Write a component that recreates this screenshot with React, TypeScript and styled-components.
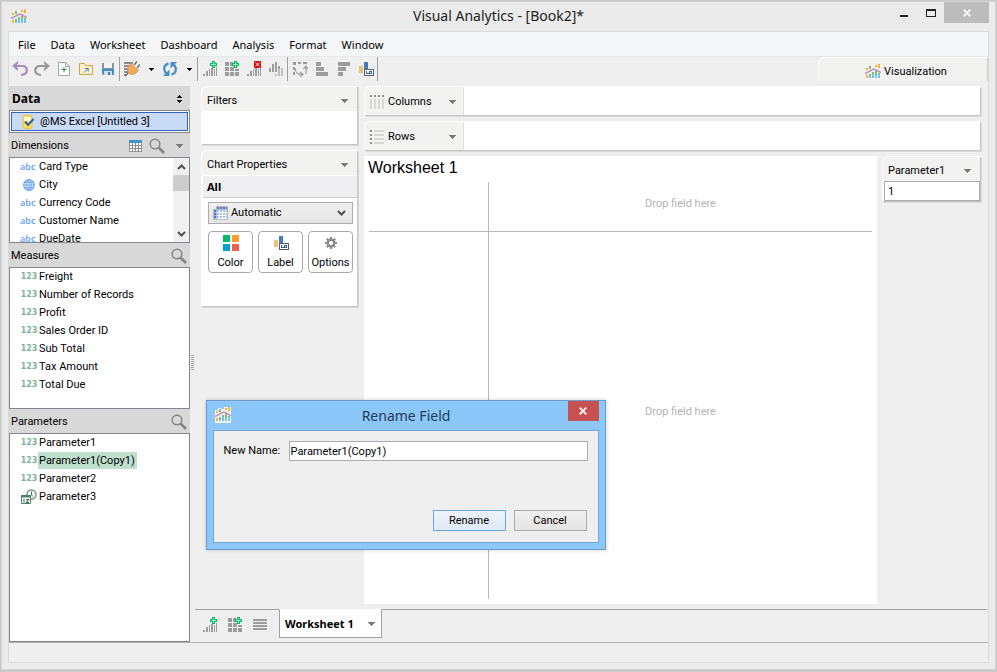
import React, { ReactNode, useState } from 'react';
import styled, { createGlobalStyle } from 'styled-components';

const ui = '"Roboto", "Liberation Sans", sans-serif';
const heading = '"Noto Sans", "Open Sans", sans-serif';

const GlobalStyle = createGlobalStyle`
  *, *::before, *::after { box-sizing: border-box; }
  body { margin: 0; background: #ebebeb; color: #000; font: 11px/18px ${ui}; }
  button, input, select { font: inherit; color: inherit; margin: 0; padding: 0; }
  button { background: none; border: 0; }
  ul, h1, h2, h3, p { margin: 0; padding: 0; font: inherit; list-style: none; }
  svg { display: block; flex: none; }
`;

/* ---------- window frame ---------- */

const AppWindow = styled.div`
  display: flex;
  flex-direction: column;
  min-height: 100vh;
  padding: 0 7px 7px;
  border: 1px solid #cacaca;
  border-width: 1px 1px 2px;
  box-shadow: inset 0 0 0 1px #d2d2d2;
`;

const TitleBar = styled.header`
  display: grid;
  grid-template-columns: 140px 1fr 140px;
  height: 30px;
`;

const TitleIcon = styled.span`
  padding: 8px 0 0 3px;
`;

const WindowTitle = styled.h1`
  text-align: center;
  font: 14px/30px ${heading};
  color: #222;
`;

const WindowButtons = styled.div`
  display: flex;
  justify-content: flex-end;
  align-items: flex-start;
`;

const WindowButton = styled.button<{ $close?: boolean }>`
  display: grid;
  place-items: center;
  width: ${p => (p.$close ? 45 : 27)}px;
  height: 21px;
  margin-top: 1px;
  background: ${p => (p.$close ? '#bcbcbc' : 'transparent')};
`;

const Frame = styled.div`
  display: flex;
  flex: 1;
  flex-direction: column;
  border: 1px solid #dadada;
  background: #efefef;
`;

const MenuBar = styled.nav`
  display: flex;
  gap: 15px;
  height: 25px;
  padding: 2px 9px 0;
  border-bottom: 1px solid #e6e8ea;
  background: #f5f6f8;
`;

const MenuItem = styled.button`
  font: 11px/22px ${heading};
`;

const Toolbar = styled.div`
  display: flex;
  align-items: center;
  height: 24px;
`;

const ToolButton = styled.button<{ $narrow?: boolean }>`
  display: grid;
  place-items: center;
  width: ${p => (p.$narrow ? 16 : 22)}px;
  height: 24px;
`;

const Separator = styled.span`
  width: 1px;
  height: 24px;
  margin-right: 1px;
  background: #a0a0a0;
`;

const ViewTab = styled.button`
  display: flex;
  align-items: center;
  justify-content: center;
  gap: 3px;
  width: 170px;
  height: 24px;
  margin-left: auto;
  padding: 4px 0 0 6px;
  border: 1px solid #fff;
  border-right-color: #cfcfcf;
  border-bottom: 0;
  border-radius: 7px 3px 0 0;
  background: #f2f2f0;
`;

const Body = styled.div`
  display: grid;
  flex: 1;
  grid-template-columns: 181px 5px 1fr;
  padding-top: 5px;
  border-bottom: 1px solid #b4b4b4;
`;

const StatusBar = styled.footer`
  height: 19px;
`;

/* ---------- data pane ---------- */

const DataPane = styled.aside`
  display: flex;
  flex-direction: column;
`;

const PaneHeader = styled.div<{ $strong?: boolean }>`
  display: flex;
  align-items: center;
  gap: 4px;
  height: 24px;
  padding: 1px 2px 0 2px;
  background: #d8d8d8;
  ${p => p.$strong && `font: bold 12px/23px ${heading}; padding-left: 3px;`}
`;

const PaneTitle = styled.h2`
  flex: 1;
`;

const HeaderButton = styled.button`
  display: grid;
  place-items: center;
  min-width: 18px;
  height: 22px;
`;

const Source = styled.div`
  height: 23px;
  padding: 1px;
  border: 1px solid #85858d;
  background: #fff;
`;

const SourceButton = styled.button`
  display: flex;
  align-items: center;
  gap: 4px;
  width: 100%;
  height: 19px;
  padding-left: 9px;
  border: 1px solid #2f62c4;
  background: #c8daf5;
`;

const FieldBox = styled.div<{ $height?: number }>`
  display: flex;
  ${p => (p.$height ? `height: ${p.$height}px;` : 'flex: 1;')}
  border: 1px solid #85858d;
  background: #fff;
  overflow: hidden;
`;

const FieldList = styled.ul`
  flex: 1;
`;

const FieldRow = styled.li`
  height: 18px;
  padding-left: 10px;
`;

const FieldButton = styled.button`
  display: flex;
  align-items: flex-start;
  height: 18px;
`;

const FieldName = styled.span<{ $selected?: boolean }>`
  padding: 0 2px 0 1px;
  line-height: 17px;
  white-space: nowrap;
  background: ${p => (p.$selected ? '#bfe0cf' : 'transparent')};
`;

const TypeTag = styled.span<{ $kind: string }>`
  display: flex;
  align-items: center;
  justify-content: ${p => (p.$kind === 'abc' ? 'flex-start' : 'center')};
  width: 18px;
  height: 17px;
  font: ${p => (p.$kind === 'abc' ? `600 9px/16px ${heading}` : '700 8px/18px "DejaVu Sans", sans-serif')};
  color: ${p => (p.$kind === 'abc' ? '#6ea5ee' : '#7fb39c')};
`;

const ScrollTrack = styled.div`
  display: flex;
  flex-direction: column;
  justify-content: space-between;
  width: 16px;
  background: #f0f0f0;
`;

const ScrollButton = styled.button`
  display: grid;
  place-items: center;
  height: 17px;
`;

const ScrollThumb = styled.div`
  height: 16px;
  margin-bottom: auto;
  background: #cdcdcd;
`;

const Splitter = styled.div`
  align-self: start;
  width: 3px;
  height: 16px;
  margin: 269px 0 0 1px;
  background: repeating-linear-gradient(#a6a6a6 0 1px, transparent 1px 2px);
`;

/* ---------- workspace ---------- */

const Workspace = styled.div`
  display: flex;
  flex-direction: column;
`;

const Stage = styled.div`
  display: grid;
  flex: 1;
  grid-template-columns: 156px 1fr;
  gap: 7px;
  padding: 0 8px 5px 6px;
`;

const Cards = styled.div`
  display: flex;
  flex-direction: column;
  gap: 6px;
`;

const Card = styled.section<{ $height?: number }>`
  ${p => p.$height && `height: ${p.$height}px;`}
  border: 1px solid #fff;
  border-right: 0;
  border-bottom: 0;
  border-radius: 6px 0 0 0;
  background: #fff;
  box-shadow: 1px 1px 0 #c6c6c6, 2px 2px 0 #dadada;
`;

const CardHeader = styled.div`
  display: flex;
  align-items: center;
  justify-content: space-between;
  height: 24px;
  padding: 3px 9px 0 5px;
  border-radius: 5px 0 0 0;
  background: #f2f2f0;
`;

const AllHeader = styled.h3`
  margin: 1px 0 4px 1px;
  padding-left: 4px;
  border-bottom: 1px solid #cfcfcf;
  background: #efeff1;
  font: bold 11px/21px ${heading};
`;

const Picker = styled.label`
  display: grid;
  grid-template-columns: 24px 1fr 20px;
  align-items: center;
  height: 22px;
  margin: 0 4px 0 6px;
  border: 1px solid #acacac;
  background: linear-gradient(#f0f0f0, #e4e4e4);
  > * { grid-row: 1; }
  > svg:first-child { grid-column: 1; margin-left: 4px; }
  > svg:last-child { grid-column: 3; margin-left: 5px; }
`;

const PickerSelect = styled.select`
  grid-column: 1 / -1;
  width: 100%;
  height: 20px;
  padding-left: 22px;
  border: 0;
  background: transparent;
  appearance: none;
`;

const MarkButtons = styled.div`
  display: grid;
  grid-template-columns: repeat(3, 1fr);
  gap: 5px;
  margin: 7px 4px 0 6px;
`;

const MarkButton = styled.button`
  display: flex;
  flex-direction: column;
  align-items: center;
  gap: 2px;
  height: 42px;
  padding-top: 3px;
  border: 1px solid #a8a8a8;
  border-radius: 4px;
  background: #fff;
  line-height: 20px;
`;

const Main = styled.div`
  display: flex;
  flex-direction: column;
  gap: 6px;
`;

const Shelf = styled(Card)`
  display: flex;
  height: 29px;
`;

const ShelfLabel = styled.div`
  display: grid;
  grid-template-columns: 18px 1fr 12px;
  align-items: center;
  width: 99px;
  padding: 1px 2px 0 5px;
  border-right: 1px solid #e2e2da;
  border-radius: 5px 0 0 0;
  background: #f2f2f0;
`;

const SheetArea = styled.div`
  display: grid;
  flex: 1;
  grid-template-columns: 1fr 98px;
  align-items: start;
  gap: 5px;
`;

const Sheet = styled.main`
  display: flex;
  flex-direction: column;
  align-self: stretch;
  padding: 0 5px 5px;
  background: #fff;
`;

const SheetTitle = styled.h2`
  margin-left: -1px;
  font: 16px/24px "Liberation Sans", Arial, sans-serif;
`;

const Pivot = styled.div`
  display: grid;
  flex: 1;
  grid-template: 50px 1fr / 120px 1fr;
  margin-top: 2px;
`;

const PivotCell = styled.div<{ $right?: boolean; $bottom?: boolean }>`
  display: grid;
  place-items: center;
  border: 0 solid #b8b8b8;
  border-right-width: ${p => (p.$right ? 1 : 0)}px;
  border-bottom-width: ${p => (p.$bottom ? 1 : 0)}px;
  color: #b4b4b4;
  line-height: 20px;
  padding-bottom: ${p => (p.$bottom ? 6 : 8)}px;
`;

const ParamInput = styled.input`
  display: block;
  width: 96px;
  height: 20px;
  margin-left: 1px;
  padding: 0 3px;
  border: 1px solid #abadb3;
  background: #fff;
  outline: 0;
`;

const SheetTabs = styled.div`
  display: flex;
  height: 33px;
  margin-right: 1px;
  border-top: 1px solid #a0a0a0;
`;

const SheetTools = styled.div`
  display: flex;
  align-items: center;
  gap: 1px;
  padding: 0 7px 2px 3px;
`;

const SheetTool = styled(ToolButton)`
  width: 24px;
`;

const SheetTab = styled.button`
  display: flex;
  align-items: center;
  justify-content: space-between;
  width: 103px;
  height: 29px;
  margin-top: -1px;
  padding: 0 6px 0 5px;
  border: 1px solid #a0a0a0;
  border-top-color: #fff;
  background: #fff;
  font: bold 11px/18px ${heading};
`;

/* ---------- dialog ---------- */

const Dialog = styled.form`
  position: absolute;
  top: 400px;
  left: calc(50% - 293px);
  display: flex;
  flex-direction: column;
  width: 400px;
  padding: 0 6px 6px;
  border: 1px solid #6a9bc9;
  background: #8cc7fa;
  box-shadow: 0 0 4px rgba(0, 0, 0, 0.2);
`;

const DialogTitleBar = styled.div`
  display: grid;
  grid-template-columns: 32px 1fr 31px;
  height: 29px;
`;

const DialogIcon = styled.span`
  padding: 6px 0 0 2px;
`;

const DialogTitle = styled.h2`
  text-align: center;
  font: 14px/29px ${heading};
  color: #1f3a52;
`;

const DialogClose = styled.button`
  display: grid;
  place-items: center;
  height: 20px;
  background: #c75050;
`;

const DialogBody = styled.div`
  padding: 10px 10px 11px;
  border: 1px solid #72a8d8;
  background: #efefef;
`;

const NameField = styled.label`
  display: grid;
  grid-template-columns: 65px 1fr;
  align-items: center;
`;

const NameInput = styled.input`
  height: 20px;
  padding: 0 1px;
  border: 1px solid #abadb3;
  background: #fff;
  outline: 0;
`;

const DialogActions = styled.div`
  display: flex;
  justify-content: flex-end;
  gap: 8px;
  margin: 49px 1px 0 0;
`;

const DialogButton = styled.button<{ $primary?: boolean }>`
  width: 73px;
  height: 21px;
  border: 1px solid ${p => (p.$primary ? '#6ca5e6' : '#acacac')};
  background: ${p => (p.$primary ? 'linear-gradient(#edf3fa, #dfeaf5)' : 'linear-gradient(#f0f0f0, #e4e4e4)')};
`;

/* ---------- icons ---------- */

const Svg = ({ children, crisp, w = 16, h = 16 }: { children: ReactNode; crisp?: boolean; w?: number; h?: number }) => (
  <svg width={w} height={h} viewBox={`0 0 ${w} ${h}`} fill="none" shapeRendering={crisp ? 'crispEdges' : undefined} aria-hidden="true">
    {children}
  </svg>
);

const GRAY = '#9d9d9d';

const LogoShapes = () => (
  <>
    <path fill="#fbb232" d="M1 4h2v2H1zM10 1h2v2h-2zM13 0h2v4h-2zM1 11h2v3H1z" />
    <path fill="#7dbb80" d="M4 2h2v3H4zM4 10h2v2H4zM7 8h2v2H7zM10 7h2v4h-2zM13 9h2v2h-2z" />
    <path fill="#6fc3f5" d="M4 12h2v2H4zM7 10h2v4H7zM10 11h2v3h-2zM13 10h2v4h-2z" />
  </>
);

const Logo = ({ outlined }: { outlined?: boolean }) => (
  <Svg>
    {outlined && (
      <path fill="#f6f3ee" shapeRendering="crispEdges" d="M0 3h3V1h3v1h3V0h7v16H0z" />
    )}
    <g shapeRendering="crispEdges"><LogoShapes /></g>
    <path d="M0 9.5 8.5 5l2 .8L16 8.5" stroke="#c08fb8" strokeWidth="1.5" />
  </Svg>
);

const Caret = ({ color = '#7a7a7a', small }: { color?: string; small?: boolean }) =>
  small ? (
    <Svg w={5} h={3} crisp><path fill={color} d="M0 0h5v1H4v1H3v1H2V2H1V1H0z" /></Svg>
  ) : (
    <Svg w={7} h={4} crisp><path fill={color} d="M0 0h7v1H6v1H5v1H4v1H3V3H2V2H1V1H0z" /></Svg>
  );

const Chevron = ({ up }: { up?: boolean }) => (
  <Svg w={9} h={6}>
    <path d={up ? 'M1 5l3.5-3.5L8 5' : 'M1 1l3.5 3.5L8 1'} stroke="#505050" strokeWidth="2" />
  </Svg>
);

const Undo = () => (
  <Svg>
    <path d="M6 0v10L0 5z" fill="#a98abf" />
    <path d="M4 5h6c2.800 0 4.800 1.500 4.800 4.200S12.800 13.600 9 14" stroke="#a98abf" strokeWidth="2.200" />
    <path d="M6 3v1H4.500zM6 6v1.200L4.500 6z" fill="#efefef" />
  </Svg>
);
const Redo = () => (
  <Svg>
    <path d="M10 0v10l6-5z" fill="#999" />
    <path d="M12 5H6C3.200 5 1.200 6.500 1.200 9.200S3.200 13.600 7 14" stroke="#999" strokeWidth="2.200" />
    <path d="M10 3v1h1.500zM10 6v1.200L11.500 6z" fill="#efefef" />
  </Svg>
);
const NewFile = () => (
  <Svg>
    <path d="M2.500 1.500h7l4 4v9h-11z" fill="#fff" stroke="#a5a5a5" />
    <path d="M9.500 1.500v4h4" stroke="#a5a5a5" />
    <path d="M7.500 6h1v2h2v1h-2v2h-1V9h-2V8h2z" fill="#1f8f3f" />
  </Svg>
);
const Folder = () => (
  <Svg>
    <path d="M1.500 2.500h5l1 2h7v9h-13z" fill="#fdf0c9" stroke="#cfa24b" />
    <path d="M6 11.500 10 7.500M7 7.500h3.200v3.200" stroke="#3887bb" />
  </Svg>
);
const Save = () => (
  <Svg crisp>
    <path d="M2 2h12v12H3l-1-1z" fill="#8c9299" />
    <path d="M4 2h8v5H4z" fill="#f3f3f3" />
    <path d="M2 8h12v6H3l-1-1z" fill="#3f92c4" />
    <path d="M4 10h8v4H4z" fill="#d4dde3" /><path d="M8 11h2v3H8z" fill="#3f81ab" />
  </Svg>
);
const Plug = () => (
  <Svg>
    <path d="M0 1h9v2H0zM0 4h6v2H0zM0 7h4v2H0zM0 10h4v2H0zM0 13h3v2H0z" fill="#8c8c8c" />
    <path d="M1 15l4-4M10 4l3-3.500M13 7l3-3.500" stroke="#6f6f6f" strokeWidth="1.500" />
    <path d="M7 2.500 14.500 9.500 11.500 12.500c-2 1.300-4.500 1.500-6 .5L4 11.500C3 9.500 3.500 6.500 4.500 5z" fill="#eda95c" stroke="#d58b3c" strokeWidth=".6" />
  </Svg>
);
const Refresh = () => (
  <Svg>
    <path d="M6.500 2.500C2.500 3.500.8 7.500 3.200 11L4.500 12.500M9.500 13.500c4-1 5.700-5 3.300-8.500L11.500 3.500" stroke="#4a90c4" strokeWidth="2.400" />
    <path d="M1 15h6.500V8.500zM15 1H8.500v6.500z" fill="#4a90c4" />
  </Svg>
);

const PlusBadge = () => (
  <>
    <path fill="#00b862" d="M10 0h3v2h2v3h-2v2h-3V5H8V2h2z" />
    <path fill="#9bf0c4" d="M11 1h1v2h2v1h-2v2h-1V4H9V3h2z" />
  </>
);
const RisingBars = ({ mark }: { mark: 'plus' | 'cross' }) => (
  <Svg crisp>
    <path fill={GRAY} d="M1 13h2v2H1zM4 10h2v5H4zM7 8h1v7H7zM9 7h2v8H9zM12 8h1v7h-1zM14 6h1v9h-1z" />
    {mark === 'plus' ? <PlusBadge /> : (
      <>
        <path fill="#cf1111" d="M8 0h7v7H8z" />
        <path fill="#ff8d8d" d="M9 1h1v1h3V1h1v1h-1v3h1v1h-1V5h-3v1H9V5h1V2H9z" />
      </>
    )}
  </Svg>
);
const GridPlus = () => (
  <Svg crisp>
    <path fill={GRAY} d="M1 1h4v4H1zM6 1h3v4H6zM1 6h4v4H1zM6 6h4v4H6zM11 8h4v2h-4zM1 11h4v4H1zM6 11h4v4H6zM11 11h4v4h-4z" />
    <PlusBadge />
  </Svg>
);
const TwoToneBars = () => (
  <Svg crisp>
    <path fill={GRAY} d="M1 7h2v4H1zM4 3h2v8H4zM7 1h2v10H7z" />
    <path fill="#bfbfbf" d="M7 13h2v2H7zM10 8h2v7h-2zM13 7h2v8h-2z" /><path fill={GRAY} d="M10 5h2v3h-2z" />
  </Svg>
);
const Swap = () => (
  <Svg>
    <path d="M1 1h3v3H1zM6 1h3v2H6zM11 1h4v2h-4zM1 6h2v3H1zM1 11h2v3H1z" fill={GRAY} />
    <path d="M3 7c0 4 3 6.500 7 6.500M8 11l3 2.500L8 16M14 13V6M11.500 8 14 5l2 3" stroke={GRAY} strokeWidth="1.200" />
  </Svg>
);
const AlignBars = ({ down }: { down?: boolean }) => (
  <Svg crisp>
    <path fill={GRAY} d={down ? 'M2 1h12v4H2zM2 6h8v4H2zM2 11h5v4H2z' : 'M2 1h5v4H2zM2 6h8v4H2zM2 11h12v4H2z'} />
  </Svg>
);
const LabelIcon = () => (
  <Svg crisp>
    <path fill="#e8c07d" d="M1 5h4v7H1z" /><path fill="#467bb5" d="M6 1h4v8H6z" />
    <path fill="#555e6b" d="M6 8h10v7H6z" /><path fill="#fff" d="M7 9h8v5H7z" />
    <path fill="#2f6396" d="M8 10h1v2h2v1H8zM11 10h3v3h-3z" /><path fill="#fff" d="M12 11h1v1h-1z" />
  </Svg>
);
const Stepper = () => (
  <Svg w={5} h={8} crisp><path fill="#111" d="M2 0h1v1h1v1h1v1H0V2h1V1h1zM0 5h5v1H4v1H3v1H2V7H1V6H0z" /></Svg>
);
const SourceIcon = () => (
  <Svg w={15}>
    <rect x="2" y="1.500" width="9" height="13" rx="2" fill="#ffdf5a" stroke="#efc12d" />
    <path d="M3 3h7v4H3z" fill="#fff8d5" />
    <path d="M4 7.500 7 11l5.500-6" stroke="#2b62a5" strokeWidth="2" />
  </Svg>
);
const TableIcon = () => (
  <Svg w={13} h={12} crisp>
    <path fill="#919191" d="M0 0h13v12H0z" /><path fill="#3c96cc" d="M0 0h13v3H0z" />
    <path fill="#fff" d="M1 3h2v2H1zM4 3h2v2H4zM7 3h2v2H7zM10 3h2v2h-2zM1 6h2v2H1zM4 6h2v2H4zM7 6h2v2H7zM10 6h2v2h-2zM1 9h2v2H1zM4 9h2v2H4zM7 9h2v2H7zM10 9h2v2h-2z" />
  </Svg>
);
const Search = () => (
  <Svg>
    <circle cx="6" cy="6" r="4.800" stroke="#858585" strokeWidth="1.500" /><path d="M9.500 9.500 15 15" stroke="#858585" strokeWidth="2.600" />
  </Svg>
);
const Globe = () => (
  <Svg w={12} h={12}>
    <circle cx="6" cy="6" r="5.300" fill="#e2eefd" stroke="#6ea5ee" strokeWidth="1.200" />
    <path d="M6 .5v11M.5 6h11M1.500 3.500h9M1.500 8.500h9M6 .7C2.500 3 2.500 9 6 11.300M6 .7c3.500 2.300 3.500 8.300 0 10.600" stroke="#6ea5ee" strokeWidth=".9" />
  </Svg>
);
const DateTimeIcon = () => (
  <Svg>
    <circle cx="10.500" cy="5.500" r="4.500" fill="#fff" stroke="#6f9b87" strokeWidth="1.500" /><path d="M10.500 2.500V6L12 7.500" stroke="#3f6e59" />
    <path d="M.5 6.500h9v8h-9z" fill="#fff" stroke="#4e8068" /><path d="M0 6h10v2.500H0z" fill="#4e8068" />
    <path d="M3 10v3.500M5 10.500h2.500l-2 3H8" stroke="#3f6e59" strokeWidth="1.200" />
  </Svg>
);
const AutoChart = () => (
  <Svg w={15} h={14} crisp>
    <path fill="#b9b9b9" d="M0 3h3V0h12v14H0z" />
    <path fill="#4d78e6" d="M4 1h2v2H4zM7 1h2v2H7zM10 1h2v2h-2zM13 1h1v2h-1zM1 4h2v2H1zM1 7h2v2H1zM1 10h2v2H1z" />
    <path fill="#fff" d="M4 4h10v9H4z" />
    <path fill="#a7bff8" d="M4 4h2v2H4zM7 4h2v2H7zM10 4h2v2h-2zM13 4h1v2h-1zM4 7h2v2H4zM7 7h2v2H7zM10 7h2v2h-2zM13 7h1v2h-1zM4 10h2v2H4zM7 10h2v2H7zM10 10h2v2h-2zM13 10h1v2h-1z" />
  </Svg>
);
const ColorIcon = () => (
  <Svg crisp>
    <path fill="#00bd6e" d="M0 0h7v7H0z" /><path fill="#fb9e2b" d="M9 0h7v7H9z" />
    <path fill="#009fd4" d="M0 9h7v7H0z" /><path fill="#f15f4f" d="M9 9h7v7H9z" />
  </Svg>
);
const Gear = () => (
  <Svg>
    <circle cx="8" cy="8" r="3.300" stroke="#8a8a8a" strokeWidth="2.400" />
    <path d="M8 2v2.500M8 11.500V14M2 8h2.500M11.500 8H14M3.800 3.800l1.700 1.700M10.500 10.500l1.700 1.700M12.200 3.800l-1.700 1.700M5.500 10.500l-1.700 1.700" stroke="#8a8a8a" strokeWidth="2.200" />
  </Svg>
);
const ColumnsIcon = () => (
  <Svg w={14} h={15} crisp>
    <path fill="#8f8f8f" d="M0 1h2v2H0zM4 1h2v2H4zM8 1h2v2H8zM12 1h2v2h-2z" />
    <path fill="#d7d7d7" d="M0 5h2v10H0zM4 5h2v10H4zM8 5h2v10H8zM12 5h2v10h-2z" />
  </Svg>
);
const RowsIcon = () => (
  <Svg w={14} h={14} crisp>
    <path fill="#8f8f8f" d="M0 0h2v2H0zM0 4h2v2H0zM0 8h2v2H0zM0 12h2v2H0z" />
    <path fill="#d7d7d7" d="M4 0h10v2H4zM4 4h10v2H4zM4 8h10v2H4zM4 12h10v2H4z" />
  </Svg>
);
const Lines = () => (
  <Svg crisp><path fill={GRAY} d="M1 2h14v2H1zM1 5h14v2H1zM1 8h14v2H1zM1 11h14v2H1z" /></Svg>
);
const Cross = () => (
  <Svg w={8} h={8}><path d="M.7.700l6.600 6.600M7.300.700.700 7.300" stroke="#fff" strokeWidth="1.700" /></Svg>
);

/* ---------- data ---------- */

type Kind = 'abc' | '123' | 'globe' | 'datetime';
type Field = { name: string; kind: Kind };

const numeric = (...names: string[]): Field[] => names.map(name => ({ name, kind: '123' }));

const dimensions: Field[] = [
  { name: 'Card Type', kind: 'abc' },
  { name: 'City', kind: 'globe' },
  { name: 'Currency Code', kind: 'abc' },
  { name: 'Customer Name', kind: 'abc' },
  { name: 'DueDate', kind: 'abc' },
];
const measures = numeric('Freight', 'Number of Records', 'Profit', 'Sales Order ID', 'Sub Total', 'Tax Amount', 'Total Due');
const parameters: Field[] = [
  ...numeric('Parameter1', 'Parameter1(Copy1)', 'Parameter2'),
  { name: 'Parameter3', kind: 'datetime' },
];
const menus = ['File', 'Data', 'Worksheet', 'Dashboard', 'Analysis', 'Format', 'Window'];

const Fields = ({ fields, selected }: { fields: Field[]; selected?: string }) => (
  <FieldList>
    {fields.map(({ name, kind }) => (
      <FieldRow key={name}>
        <FieldButton type="button">
          <TypeTag $kind={kind}>
            {kind === 'globe' ? <Globe /> : kind === 'datetime' ? <DateTimeIcon /> : kind}
          </TypeTag>
          <FieldName $selected={name === selected}>{name}</FieldName>
        </FieldButton>
      </FieldRow>
    ))}
  </FieldList>
);

const Tool = ({ label, children }: { label: string; children: ReactNode }) => (
  <ToolButton type="button" aria-label={label}>{children}</ToolButton>
);
const MoreTool = ({ label }: { label: string }) => (
  <ToolButton type="button" $narrow aria-label={label}><Caret small color="#000" /></ToolButton>
);

export default function App() {
  const [value, setValue] = useState('1');
  const [name, setName] = useState('Parameter1(Copy1)');

  return (
    <AppWindow>
      <GlobalStyle />
      <TitleBar>
        <TitleIcon><Logo /></TitleIcon>
        <WindowTitle>Visual Analytics - [Book2]*</WindowTitle>
        <WindowButtons>
          <WindowButton type="button" aria-label="Minimize">
            <Svg w={8} h={12} crisp><path fill="#222" d="M0 8h8v2H0z" /></Svg>
          </WindowButton>
          <WindowButton type="button" aria-label="Maximize">
            <Svg w={10} h={8} crisp><path fill="#222" fillRule="evenodd" d="M0 0h10v8H0zM1 2v5h8V2z" /></Svg>
          </WindowButton>
          <WindowButton type="button" $close aria-label="Close"><Cross /></WindowButton>
        </WindowButtons>
      </TitleBar>

      <Frame>
        <MenuBar>
          {menus.map(m => <MenuItem key={m} type="button">{m}</MenuItem>)}
        </MenuBar>
        <Toolbar>
          <Tool label="Undo"><Undo /></Tool>
          <Tool label="Redo"><Redo /></Tool>
          <Tool label="New"><NewFile /></Tool>
          <Tool label="Open"><Folder /></Tool>
          <Tool label="Save"><Save /></Tool>
          <Separator />
          <Tool label="Connect"><Plug /></Tool>
          <MoreTool label="Connect options" />
          <Tool label="Refresh"><Refresh /></Tool>
          <MoreTool label="Refresh options" />
          <Separator />
          <Tool label="New worksheet"><RisingBars mark="plus" /></Tool>
          <Tool label="New dashboard"><GridPlus /></Tool>
          <Tool label="Clear worksheet"><RisingBars mark="cross" /></Tool>
          <Tool label="Duplicate"><TwoToneBars /></Tool>
          <Separator />
          <Tool label="Swap axes"><Swap /></Tool>
          <Tool label="Sort ascending"><AlignBars /></Tool>
          <Tool label="Sort descending"><AlignBars down /></Tool>
          <Tool label="Show labels"><LabelIcon /></Tool>
          <Separator />
          <ViewTab type="button"><Logo />Visualization</ViewTab>
        </Toolbar>

        <Body>
          <DataPane>
            <PaneHeader $strong>
              <PaneTitle>Data</PaneTitle>
              <HeaderButton type="button" aria-label="Switch source"><Stepper /></HeaderButton>
            </PaneHeader>
            <Source>
              <SourceButton type="button"><SourceIcon />@MS Excel [Untitled 3]</SourceButton>
            </Source>
            <PaneHeader>
              <PaneTitle>Dimensions</PaneTitle>
              <HeaderButton type="button" aria-label="View data"><TableIcon /></HeaderButton>
              <HeaderButton type="button" aria-label="Search dimensions"><Search /></HeaderButton>
              <HeaderButton type="button" aria-label="Dimension options"><Caret /></HeaderButton>
            </PaneHeader>
            <FieldBox $height={86}>
              <Fields fields={dimensions} />
              <ScrollTrack>
                <ScrollButton type="button" aria-label="Scroll up"><Chevron up /></ScrollButton>
                <ScrollThumb />
                <ScrollButton type="button" aria-label="Scroll down"><Chevron /></ScrollButton>
              </ScrollTrack>
            </FieldBox>
            <PaneHeader>
              <PaneTitle>Measures</PaneTitle>
              <HeaderButton type="button" aria-label="Search measures"><Search /></HeaderButton>
            </PaneHeader>
            <FieldBox $height={142}>
              <Fields fields={measures} />
            </FieldBox>
            <PaneHeader>
              <PaneTitle>Parameters</PaneTitle>
              <HeaderButton type="button" aria-label="Search parameters"><Search /></HeaderButton>
            </PaneHeader>
            <FieldBox>
              <Fields fields={parameters} selected="Parameter1(Copy1)" />
            </FieldBox>
          </DataPane>

          <Splitter />

          <Workspace>
            <Stage>
              <Cards>
                <Card $height={58}>
                  <CardHeader><h2>Filters</h2><Caret /></CardHeader>
                </Card>
                <Card $height={156}>
                  <CardHeader><h2>Chart Properties</h2><Caret /></CardHeader>
                  <AllHeader>All</AllHeader>
                  <Picker>
                    <AutoChart />
                    <PickerSelect aria-label="Chart type" defaultValue="Automatic">
                      <option>Automatic</option>
                    </PickerSelect>
                    <Chevron />
                  </Picker>
                  <MarkButtons>
                    <MarkButton type="button"><ColorIcon />Color</MarkButton>
                    <MarkButton type="button"><LabelIcon />Label</MarkButton>
                    <MarkButton type="button"><Gear />Options</MarkButton>
                  </MarkButtons>
                </Card>
              </Cards>

              <Main>
                <Shelf>
                  <ShelfLabel><ColumnsIcon /><h2>Columns</h2><Caret /></ShelfLabel>
                </Shelf>
                <Shelf>
                  <ShelfLabel><RowsIcon /><h2>Rows</h2><Caret /></ShelfLabel>
                </Shelf>
                <SheetArea>
                  <Sheet>
                    <SheetTitle>Worksheet 1</SheetTitle>
                    <Pivot>
                      <PivotCell $right $bottom />
                      <PivotCell $bottom>Drop field here</PivotCell>
                      <PivotCell $right />
                      <PivotCell>Drop field here</PivotCell>
                    </Pivot>
                  </Sheet>
                  <Card>
                    <CardHeader><label htmlFor="parameter1">Parameter1</label><Caret /></CardHeader>
                    <ParamInput id="parameter1" value={value} onChange={e => setValue(e.target.value)} />
                  </Card>
                </SheetArea>
              </Main>
            </Stage>

            <SheetTabs>
              <SheetTools>
                <SheetTool type="button" aria-label="Add worksheet"><RisingBars mark="plus" /></SheetTool>
                <SheetTool type="button" aria-label="Add dashboard"><GridPlus /></SheetTool>
                <SheetTool type="button" aria-label="List sheets"><Lines /></SheetTool>
              </SheetTools>
              <SheetTab type="button">Worksheet 1<Caret /></SheetTab>
            </SheetTabs>
          </Workspace>
        </Body>
        <StatusBar />
      </Frame>

      <Dialog role="dialog" aria-labelledby="rename-title" onSubmit={e => e.preventDefault()}>
        <DialogTitleBar>
          <DialogIcon><Logo outlined /></DialogIcon>
          <DialogTitle id="rename-title">Rename Field</DialogTitle>
          <DialogClose type="button" aria-label="Close dialog"><Cross /></DialogClose>
        </DialogTitleBar>
        <DialogBody>
          <NameField>
            New Name:
            <NameInput type="text" value={name} onChange={e => setName(e.target.value)} />
          </NameField>
          <DialogActions>
            <DialogButton type="submit" $primary>Rename</DialogButton>
            <DialogButton type="button">Cancel</DialogButton>
          </DialogActions>
        </DialogBody>
      </Dialog>
    </AppWindow>
  );
}
